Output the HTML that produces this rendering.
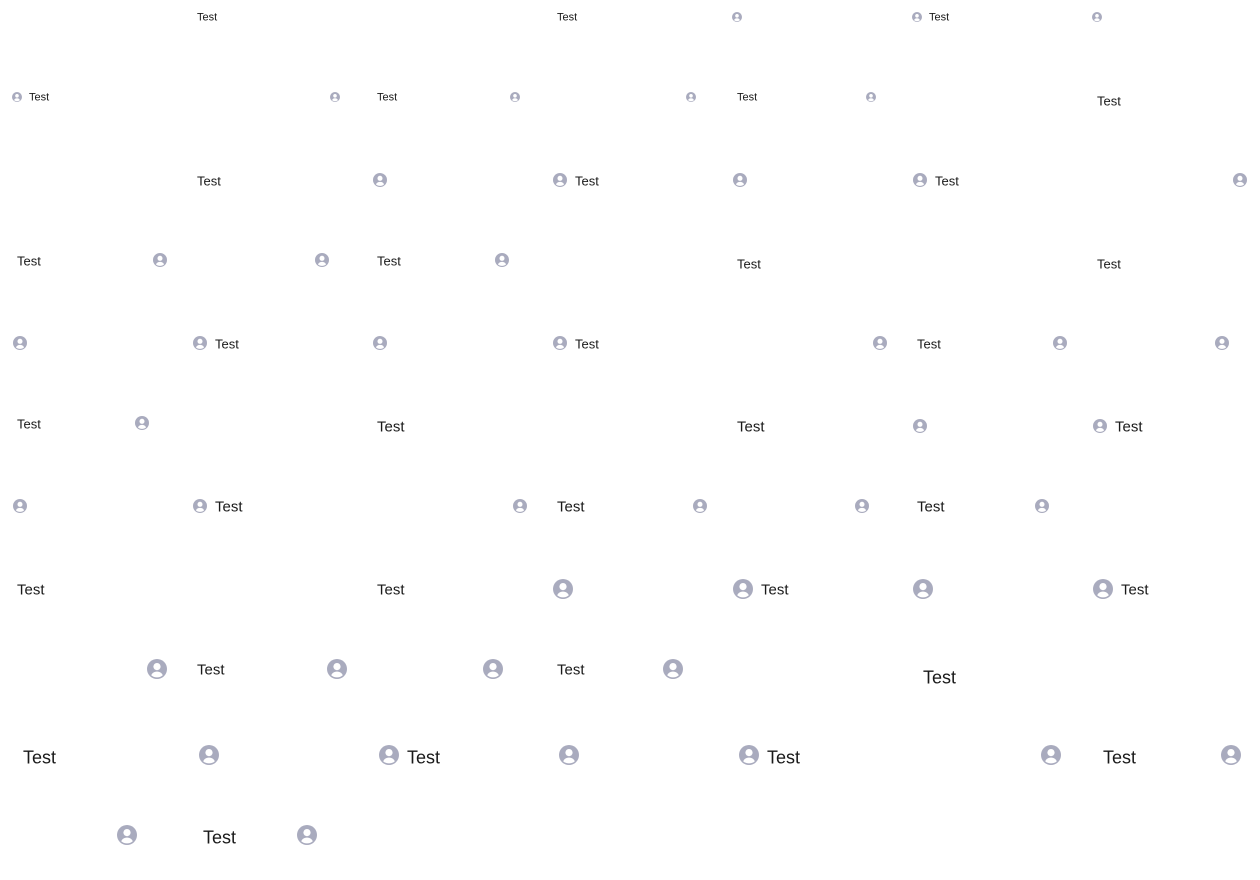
<!DOCTYPE html>
<html><head><meta charset="utf-8">
<style>
html,body{margin:0;padding:0;background:#fff;width:1260px;height:880px;overflow:hidden;position:relative;font-family:"Liberation Sans",sans-serif;color:#1a1a1a}
.t{position:absolute;transform:translateY(-42%);line-height:1;white-space:nowrap}
.t1{font-size:11px}.t2{font-size:13px}.t3{font-size:15px}.t4{font-size:18px}
.i{position:absolute;transform:translate(-50%,-50%);display:block}
.i1{width:10px;height:10px}.i2{width:14px;height:14px}.i3{width:20px;height:20px}
</style></head><body>
<svg width="0" height="0" style="position:absolute"><defs><symbol id="u" viewBox="0 0 20 20"><circle cx="10" cy="10" r="10" fill="#a9abbe"/><circle cx="10" cy="7.6" r="3.6" fill="#fff"/><path d="M4.2 16.2C5.3 13.6 7.4 12.6 10 12.6S14.7 13.6 15.8 16.2C14.3 17.6 12.3 18.4 10 18.4S5.7 17.6 4.2 16.2Z" fill="#fff"/></symbol></defs></svg>

<span class="t t1" style="left:197px;top:17px">Test</span>
<span class="t t1" style="left:557px;top:17px">Test</span>
<svg class="i i1" style="left:737px;top:17px"><use href="#u"/></svg>
<svg class="i i1" style="left:917px;top:17px"><use href="#u"/></svg>
<span class="t t1" style="left:929px;top:17px">Test</span>
<svg class="i i1" style="left:1097px;top:17px"><use href="#u"/></svg>

<svg class="i i1" style="left:17px;top:97px"><use href="#u"/></svg>
<span class="t t1" style="left:29px;top:97px">Test</span>
<svg class="i i1" style="left:335px;top:97px"><use href="#u"/></svg>
<span class="t t1" style="left:377px;top:97px">Test</span>
<svg class="i i1" style="left:515px;top:97px"><use href="#u"/></svg>
<svg class="i i1" style="left:691px;top:97px"><use href="#u"/></svg>
<span class="t t1" style="left:737px;top:97px">Test</span>
<svg class="i i1" style="left:871px;top:97px"><use href="#u"/></svg>
<span class="t t2" style="left:1097px;top:100px">Test</span>

<span class="t t2" style="left:197px;top:180px">Test</span>
<svg class="i i2" style="left:380px;top:180px"><use href="#u"/></svg>
<svg class="i i2" style="left:560px;top:180px"><use href="#u"/></svg>
<span class="t t2" style="left:575px;top:180px">Test</span>
<svg class="i i2" style="left:740px;top:180px"><use href="#u"/></svg>
<svg class="i i2" style="left:920px;top:180px"><use href="#u"/></svg>
<span class="t t2" style="left:935px;top:180px">Test</span>
<svg class="i i2" style="left:1240px;top:180px"><use href="#u"/></svg>

<span class="t t2" style="left:17px;top:260px">Test</span>
<svg class="i i2" style="left:160px;top:260px"><use href="#u"/></svg>
<svg class="i i2" style="left:322px;top:260px"><use href="#u"/></svg>
<span class="t t2" style="left:377px;top:260px">Test</span>
<svg class="i i2" style="left:502px;top:260px"><use href="#u"/></svg>
<span class="t t2" style="left:737px;top:263px">Test</span>
<span class="t t2" style="left:1097px;top:263px">Test</span>

<svg class="i i2" style="left:20px;top:343px"><use href="#u"/></svg>
<svg class="i i2" style="left:200px;top:343px"><use href="#u"/></svg>
<span class="t t2" style="left:215px;top:343px">Test</span>
<svg class="i i2" style="left:380px;top:343px"><use href="#u"/></svg>
<svg class="i i2" style="left:560px;top:343px"><use href="#u"/></svg>
<span class="t t2" style="left:575px;top:343px">Test</span>
<svg class="i i2" style="left:880px;top:343px"><use href="#u"/></svg>
<span class="t t2" style="left:917px;top:343px">Test</span>
<svg class="i i2" style="left:1060px;top:343px"><use href="#u"/></svg>
<svg class="i i2" style="left:1222px;top:343px"><use href="#u"/></svg>

<span class="t t2" style="left:17px;top:423px">Test</span>
<svg class="i i2" style="left:142px;top:423px"><use href="#u"/></svg>
<span class="t t3" style="left:377px;top:426px">Test</span>
<span class="t t3" style="left:737px;top:426px">Test</span>
<svg class="i i2" style="left:920px;top:426px"><use href="#u"/></svg>
<svg class="i i2" style="left:1100px;top:426px"><use href="#u"/></svg>
<span class="t t3" style="left:1115px;top:426px">Test</span>

<svg class="i i2" style="left:20px;top:506px"><use href="#u"/></svg>
<svg class="i i2" style="left:200px;top:506px"><use href="#u"/></svg>
<span class="t t3" style="left:215px;top:506px">Test</span>
<svg class="i i2" style="left:520px;top:506px"><use href="#u"/></svg>
<span class="t t3" style="left:557px;top:506px">Test</span>
<svg class="i i2" style="left:700px;top:506px"><use href="#u"/></svg>
<svg class="i i2" style="left:862px;top:506px"><use href="#u"/></svg>
<span class="t t3" style="left:917px;top:506px">Test</span>
<svg class="i i2" style="left:1042px;top:506px"><use href="#u"/></svg>

<span class="t t3" style="left:17px;top:589px">Test</span>
<span class="t t3" style="left:377px;top:589px">Test</span>
<svg class="i i3" style="left:563px;top:589px"><use href="#u"/></svg>
<svg class="i i3" style="left:743px;top:589px"><use href="#u"/></svg>
<span class="t t3" style="left:761px;top:589px">Test</span>
<svg class="i i3" style="left:923px;top:589px"><use href="#u"/></svg>
<svg class="i i3" style="left:1103px;top:589px"><use href="#u"/></svg>
<span class="t t3" style="left:1121px;top:589px">Test</span>

<svg class="i i3" style="left:157px;top:669px"><use href="#u"/></svg>
<span class="t t3" style="left:197px;top:669px">Test</span>
<svg class="i i3" style="left:337px;top:669px"><use href="#u"/></svg>
<svg class="i i3" style="left:493px;top:669px"><use href="#u"/></svg>
<span class="t t3" style="left:557px;top:669px">Test</span>
<svg class="i i3" style="left:673px;top:669px"><use href="#u"/></svg>
<span class="t t4" style="left:923px;top:676px">Test</span>

<span class="t t4" style="left:23px;top:756px">Test</span>
<svg class="i i3" style="left:209px;top:755px"><use href="#u"/></svg>
<svg class="i i3" style="left:389px;top:755px"><use href="#u"/></svg>
<span class="t t4" style="left:407px;top:756px">Test</span>
<svg class="i i3" style="left:569px;top:755px"><use href="#u"/></svg>
<svg class="i i3" style="left:749px;top:755px"><use href="#u"/></svg>
<span class="t t4" style="left:767px;top:756px">Test</span>
<svg class="i i3" style="left:1051px;top:755px"><use href="#u"/></svg>
<span class="t t4" style="left:1103px;top:756px">Test</span>
<svg class="i i3" style="left:1231px;top:755px"><use href="#u"/></svg>

<svg class="i i3" style="left:127px;top:835px"><use href="#u"/></svg>
<span class="t t4" style="left:203px;top:836px">Test</span>
<svg class="i i3" style="left:307px;top:835px"><use href="#u"/></svg>
</body></html>
